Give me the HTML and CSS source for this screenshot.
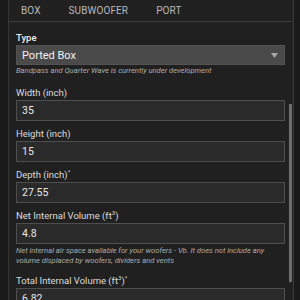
FILE: index.html
```html
<!DOCTYPE html>
<html>
<head>
<meta charset="utf-8">
<link rel="stylesheet" href="styles.css">
</head>
<body>
<div class="frame">
  <div class="edge edge-left"></div>
  <div class="panel">
    <div class="tabs">
      <span class="tab">Box</span>
      <span class="tab">Subwoofer</span>
      <span class="tab">Port</span>
    </div>
    <div class="body">
      <div class="form">
        <div class="field field-hinted">
          <div class="label label-strong">Type</div>
          <div class="select">
            <span>Ported Box</span>
            <svg class="caret" width="7" height="5" viewBox="0 0 7 5"><path d="M0 0 L7 0 L3.5 5 Z" fill="#a8a8a8"/></svg>
          </div>
          <div class="hint">Bandpass and Quarter Wave is currently under development</div>
        </div>
        <div class="field">
          <div class="label">Width (inch)</div>
          <div class="input">35</div>
        </div>
        <div class="field">
          <div class="label">Height (inch)</div>
          <div class="input">15</div>
        </div>
        <div class="field">
          <div class="label">Depth (inch)<sup>*</sup></div>
          <div class="input">27.55</div>
        </div>
        <div class="field field-hinted-2">
          <div class="label">Net Internal Volume (ft<sup>3</sup>)</div>
          <div class="input">4.8</div>
          <div class="hint hint-gap">Net internal air space available for your woofers - Vb. It does not include any volume displaced by woofers, dividers and vents</div>
        </div>
        <div class="field">
          <div class="label">Total Internal Volume (ft<sup>3</sup>)<sup>*</sup></div>
          <div class="input">6.82</div>
        </div>
      </div>
      <div class="scrolltrack"><div class="thumb"></div></div>
    </div>
  </div>
  <div class="edge edge-right"></div>
</div>
</body>
</html>
```
FILE: styles.css
```css
html, body {
  margin: 0;
  padding: 0;
  background: #1b1b1b;
  height: 300px;
  overflow: hidden;
}
body {
  font-family: Roboto, "Noto Sans", sans-serif;
  color: #e6e6e6;
}
.frame {
  display: flex;
  height: 300px;
  overflow: hidden;
}
.edge {
  background: #1a1a1a;
  flex: none;
}
.edge-left { width: 8px; }
.edge-right { width: 6px; }
.panel {
  flex: 1;
  background: #202020;
  border-left: 1px solid #353535;
  border-right: 1px solid #383838;
  display: flex;
  flex-direction: column;
  overflow: hidden;
}
.tabs {
  flex: none;
  display: flex;
  height: 21px;
  align-items: center;
  padding-left: 12px;
  border-bottom: 1px solid #3c3c3c;
}
.tab {
  font-size: 10px;
  text-transform: uppercase;
  color: #b9b9b9;
  margin-right: 28px;
  letter-spacing: 0.1px;
}
.body {
  display: flex;
  flex: none;
  padding-top: 9px;
}
.form {
  flex: 1;
  padding-left: 7px;
  padding-right: 4px;
}
.scrolltrack {
  flex: none;
  width: 3px;
  margin-right: 1px;
}
.thumb {
  margin-top: 73px;
  height: 178px;
  background: #6e6e6e;
}
.field {
  margin-bottom: 6px;
}
.field-hinted {
  margin-bottom: 10px;
}
.field-hinted-2 {
  margin-bottom: 8px;
}
.label {
  font-size: 9.5px;
  line-height: 14px;
  height: 14px;
  color: #dcdcdc;
}
.label-strong {
  font-weight: 500;
  color: #eeeeee;
}
.label sup {
  font-size: 6px;
  line-height: 0;
}
.select {
  height: 20px;
  background: #4a4a4a;
  border: 1px solid #525252;
  box-sizing: border-box;
  display: flex;
  align-items: center;
  justify-content: space-between;
  padding: 0 6px 0 5px;
  font-size: 11px;
  color: #f2f2f2;
}
.caret {
  display: block;
}
.input {
  height: 21px;
  box-sizing: border-box;
  background: #2a2a2a;
  border: 1px solid #4e4e4e;
  display: flex;
  align-items: center;
  padding-left: 5px;
  font-size: 10.5px;
  color: #e8e8e8;
}
.hint {
  font-size: 7.6px;
  line-height: 10px;
  font-style: italic;
  color: #acacac;
  margin-top: 1px;
}
.hint-gap {
  margin-top: 2px;
}
```
